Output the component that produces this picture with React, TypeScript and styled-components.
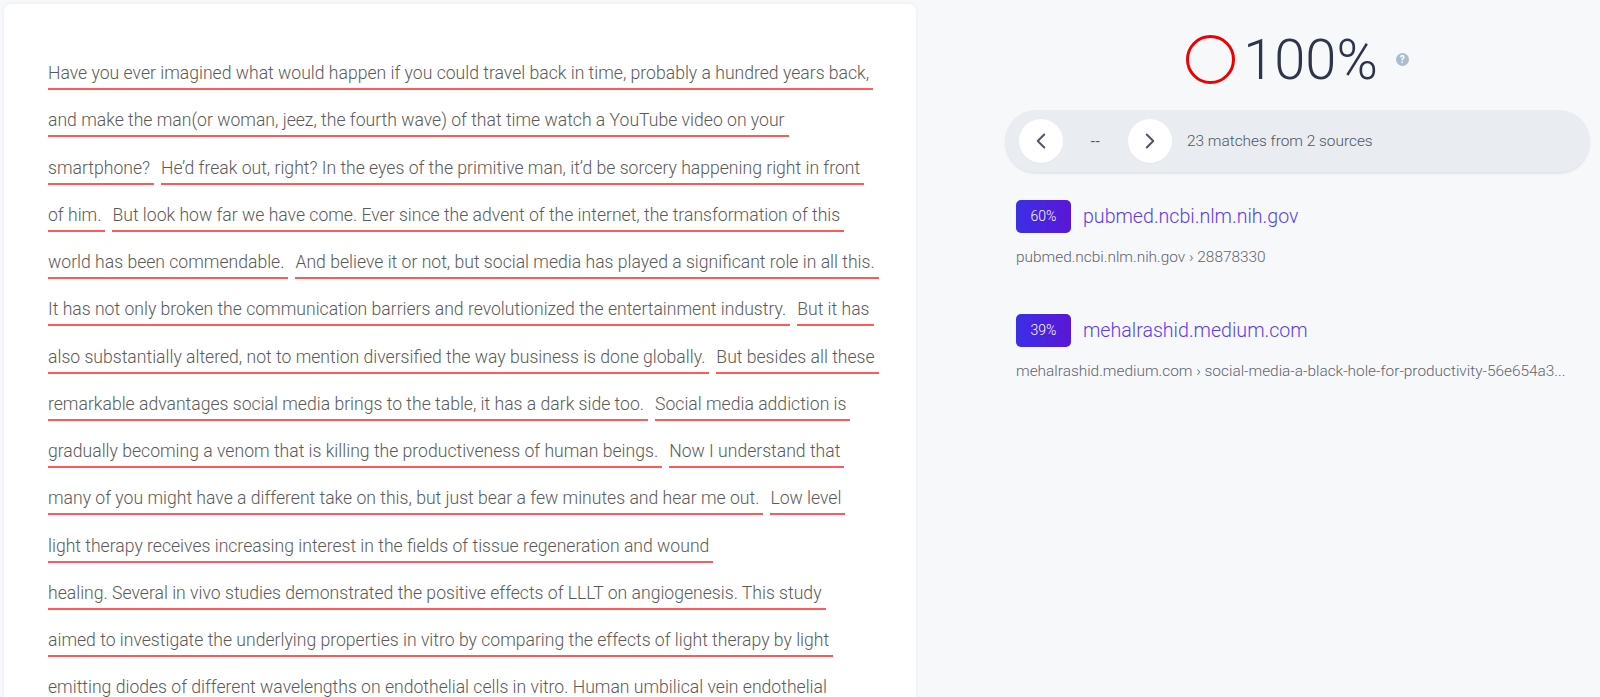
import React from 'react';
import styled, { createGlobalStyle } from 'styled-components';
import { ChevronLeft, ChevronRight } from 'lucide-react';

const GlobalStyle = createGlobalStyle`
  html, body {
    margin: 0;
    padding: 0;
    background: #f7f8fa;
    font-family: Roboto, "Liberation Sans", Arial, sans-serif;
    overflow: hidden;
  }
`;

// each line of the document, split into matched chunks
const LINES: string[][] = [
  ['Have you ever imagined what would happen if you could travel back in time, probably a hundred years back,'],
  ['and make the man(or woman, jeez, the fourth wave) of that time watch a YouTube video on your'],
  ['smartphone?', 'He’d freak out, right? In the eyes of the primitive man, it’d be sorcery happening right in front'],
  ['of him.', 'But look how far we have come. Ever since the advent of the internet, the transformation of this'],
  ['world has been commendable.', 'And believe it or not, but social media has played a significant role in all this.'],
  ['It has not only broken the communication barriers and revolutionized the entertainment industry.', 'But it has'],
  ['also substantially altered, not to mention diversified the way business is done globally.', 'But besides all these'],
  ['remarkable advantages social media brings to the table, it has a dark side too.', 'Social media addiction is'],
  ['gradually becoming a venom that is killing the productiveness of human beings.', 'Now I understand that'],
  ['many of you might have a different take on this, but just bear a few minutes and hear me out.', 'Low level'],
  ['light therapy receives increasing interest in the fields of tissue regeneration and wound'],
  ['healing. Several in vivo studies demonstrated the positive effects of LLLT on angiogenesis. This study'],
  ['aimed to investigate the underlying properties in vitro by comparing the effects of light therapy by light'],
  ['emitting diodes of different wavelengths on endothelial cells in vitro. Human umbilical vein endothelial'],
];

const SOURCES = [
  { percent: '60%', title: 'pubmed.ncbi.nlm.nih.gov', host: 'pubmed.ncbi.nlm.nih.gov', path: '28878330' },
  {
    percent: '39%',
    title: 'mehalrashid.medium.com',
    host: 'mehalrashid.medium.com',
    path: 'social-media-a-black-hole-for-productivity-56e654a3...',
  },
];

const Page = styled.div`
  display: flex;
  align-items: flex-start;
  height: 697px;
  padding: 4px 10px 0 4px;
  box-sizing: border-box;
`;

const DocCard = styled.div`
  width: 912px;
  min-height: 760px;
  flex-shrink: 0;
  box-sizing: border-box;
  padding: 46px 44px 0 44px;
  background: #fff;
  border-radius: 8px;
  box-shadow: 0 0 4px rgba(30, 40, 60, 0.06);
`;

const Line = styled.div`
  line-height: 47.25px;
  font-size: 17.6px;
  font-weight: 300;
  color: #5a5a5a;
  white-space: nowrap;
`;

const Chunk = styled.span`
  padding-right: 4px;
  padding-bottom: 5px;
  margin-right: 7px;
  border-bottom: 2px solid #ff5a5a;
`;

const Side = styled.div`
  flex: 1;
  padding-left: 89px;
  display: flex;
  flex-direction: column;
`;

const Score = styled.div`
  display: flex;
  align-items: center;
  justify-content: center;
  margin-top: 31px;
  height: 49px;
`;

const Ring = styled.div`
  width: 49px;
  height: 49px;
  box-sizing: border-box;
  border: 3px solid #ee0000;
  border-radius: 50%;
  margin-right: 8px;
`;

const Percent = styled.div`
  font-size: 56px;
  font-weight: 300;
  line-height: 1;
  color: #2d3548;
`;

const Help = styled.div`
  width: 13px;
  height: 13px;
  margin-left: 18px;
  border-radius: 50%;
  background: #a9bdcf;
  color: #fff;
  font-size: 10px;
  font-weight: 700;
  line-height: 13px;
  text-align: center;
`;

const Pager = styled.div`
  margin-top: 26px;
  height: 62px;
  border-radius: 31px;
  background: #e9ecf1;
  box-shadow: 0 2px 2px rgba(60, 70, 90, 0.1);
  display: flex;
  align-items: center;
  padding-left: 14px;
`;

const RoundButton = styled.button`
  width: 44px;
  height: 44px;
  border: none;
  border-radius: 50%;
  background: #fff;
  display: flex;
  align-items: center;
  justify-content: center;
  padding: 0;
  color: #4d5566;
  box-shadow: 0 1px 1px rgba(0, 0, 0, 0.03);
`;

const Counter = styled.div`
  width: 65px;
  text-align: center;
  font-size: 15.4px;
  letter-spacing: 0.5px;
  color: #555;
`;

const MatchInfo = styled.div`
  margin-left: 15px;
  font-size: 15.4px;
  font-weight: 300;
  color: #4e5663;
`;

const SourceList = styled.div`
  margin-top: 28px;
  padding-left: 11px;
  display: flex;
  flex-direction: column;
  gap: 47px;
`;

const Source = styled.div`
  display: flex;
  flex-direction: column;
`;

const SourceHead = styled.div`
  display: flex;
  align-items: center;
`;

const Badge = styled.div`
  width: 55px;
  height: 33px;
  border-radius: 5px;
  background: linear-gradient(90deg, #3a2fe6 0%, #5a17d6 100%);
  color: #fff;
  font-size: 14px;
  font-weight: 300;
  line-height: 33px;
  text-align: center;
`;

const SourceTitle = styled.div`
  margin-left: 12px;
  font-size: 19.6px;
  font-weight: 300;
  color: #5b3de9;
`;

const SourceUrl = styled.div`
  margin-top: 14px;
  font-size: 15.4px;
  font-weight: 300;
  line-height: 20px;
  color: #5f6370;
`;

const App = () => {
  return (
    <>
      <GlobalStyle />
      <Page>
        <DocCard>
          {LINES.map((chunks, i) => (
            <Line key={i}>
              {chunks.map((c, j) => (
                <Chunk key={j}>{c}</Chunk>
              ))}
            </Line>
          ))}
        </DocCard>
        <Side>
          <Score>
            <Ring />
            <Percent>100%</Percent>
            <Help>?</Help>
          </Score>
          <Pager>
            <RoundButton>
              <ChevronLeft size={26} strokeWidth={1.8} />
            </RoundButton>
            <Counter>--</Counter>
            <RoundButton>
              <ChevronRight size={26} strokeWidth={1.8} />
            </RoundButton>
            <MatchInfo>23 matches from 2 sources</MatchInfo>
          </Pager>
          <SourceList>
            {SOURCES.map((s) => (
              <Source key={s.title}>
                <SourceHead>
                  <Badge>{s.percent}</Badge>
                  <SourceTitle>{s.title}</SourceTitle>
                </SourceHead>
                <SourceUrl>
                  {s.host} › {s.path}
                </SourceUrl>
              </Source>
            ))}
          </SourceList>
        </Side>
      </Page>
    </>
  );
};

export default App;
